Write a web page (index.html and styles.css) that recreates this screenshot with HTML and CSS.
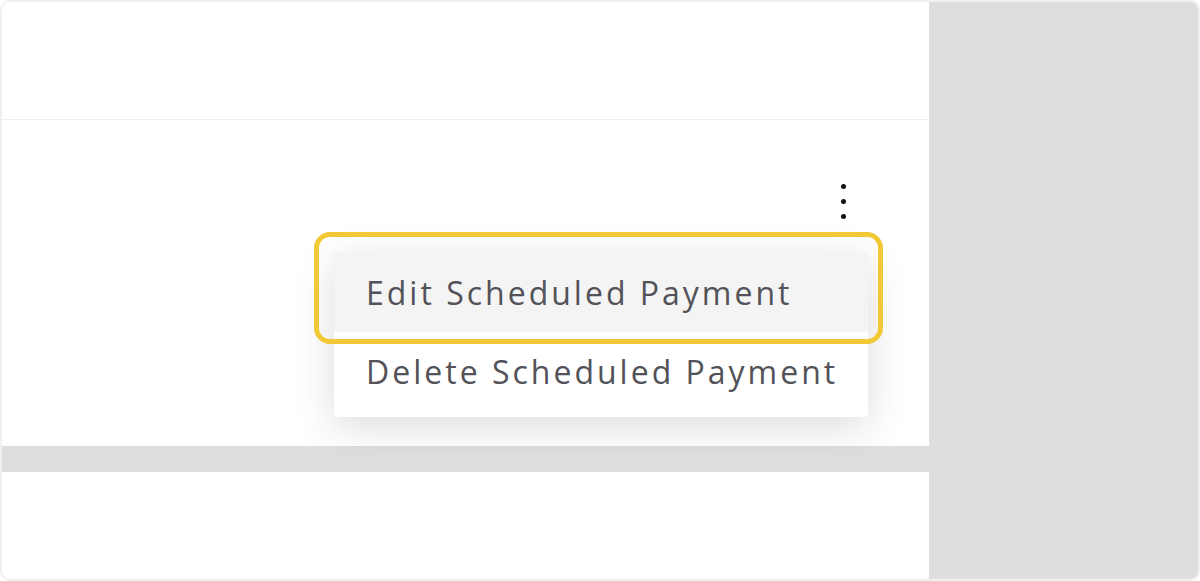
FILE: index.html
```html
<!DOCTYPE html>
<html>
<head>
<meta charset="utf-8">
<link rel="stylesheet" href="styles.css">
</head>
<body>
<div class="frame">
  <div class="main">
    <div class="header"></div>
    <div class="card">
      <button class="kebab" aria-label="More">
        <span class="dot"></span><span class="dot"></span><span class="dot"></span>
      </button>
      <div class="menu">
        <div class="item active">Edit Scheduled Payment</div>
        <div class="item">Delete Scheduled Payment</div>
      </div>
      <div class="focus-ring"></div>
    </div>
    <div class="band"></div>
    <div class="footer"></div>
  </div>
  <div class="side"></div>
</div>
</body>
</html>
```
FILE: styles.css
```css
html, body {
  margin: 0;
  padding: 0;
  background: #ffffff;
}
.frame {
  box-sizing: border-box;
  width: 1200px;
  height: 581px;
  border: 2px solid #efeff4;
  border-radius: 10px;
  display: flex;
  overflow: hidden;
  font-family: "Open Sans", "Liberation Sans", sans-serif;
}
.main {
  width: 927px;
  display: flex;
  flex-direction: column;
  background: #ffffff;
}
.side {
  flex: 1;
  background: #dedede;
}
.header {
  height: 117px;
  border-bottom: 1px solid #efefef;
}
.card {
  height: 326px;
  position: relative;
}
.band {
  height: 26px;
  background: #dedede;
}
.footer {
  flex: 1;
}
.kebab {
  position: absolute;
  left: 834px;
  top: 64px;
  width: 14px;
  height: 35px;
  padding: 0;
  border: 0;
  background: transparent;
  display: flex;
  flex-direction: column;
  align-items: center;
  justify-content: space-between;
}
.dot {
  width: 5px;
  height: 5px;
  border-radius: 50%;
  background: #111;
}
.menu {
  position: absolute;
  left: 332px;
  top: 132px;
  width: 534px;
  background: #ffffff;
  border-radius: 4px;
  box-shadow: 0 10px 40px rgba(0, 0, 0, 0.14);
  z-index: 2;
  display: flex;
  flex-direction: column;
}
.item {
  height: 80px;
  display: flex;
  align-items: center;
  padding-left: 32px;
  font-size: 32px;
  color: #525258;
  letter-spacing: 3px;
}
.item + .item {
  height: 85px;
  padding-bottom: 6px;
  box-sizing: border-box;
}
.item.active {
  background: #f4f4f4;
}
.focus-ring {
  position: absolute;
  left: 312px;
  top: 112px;
  width: 569px;
  height: 112px;
  box-sizing: border-box;
  border: 5px solid #f1c835;
  border-radius: 16px;
  z-index: 3;
}
```
